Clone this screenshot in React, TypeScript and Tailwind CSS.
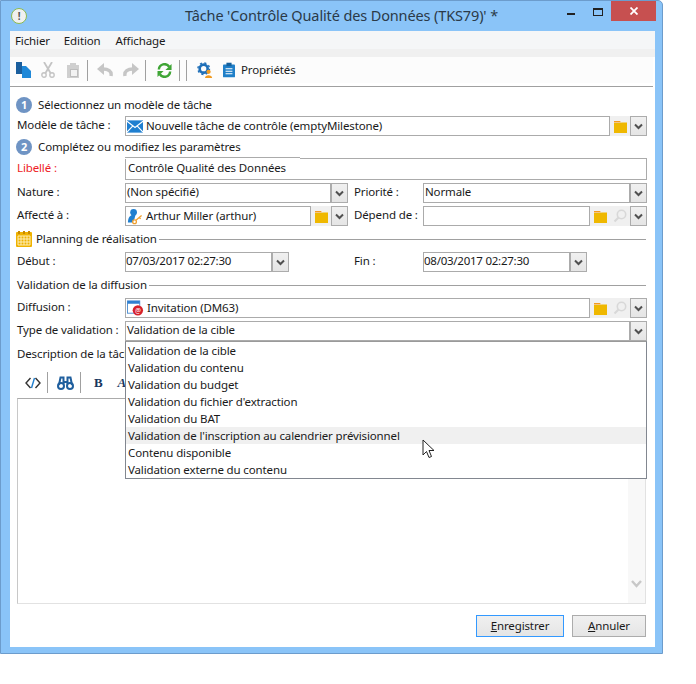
import type { ReactNode } from 'react'

function Chevron() {
  return (
    <svg width="9" height="7" viewBox="0 0 9 7">
      <path d="M1 1.5 L4.5 5 L8 1.5" fill="none" stroke="#505050" strokeWidth="2" />
    </svg>
  )
}

function DropButton() {
  return (
    <div className="flex h-full w-[17px] shrink-0 items-center justify-center border border-[#acacac] bg-gradient-to-b from-[#f0f0f0] to-[#e5e5e5]">
      <Chevron />
    </div>
  )
}

function FolderIcon() {
  return (
    <svg width="13" height="13" viewBox="0 0 13 13">
      <path d="M0 1 H6 L7 2.5 H0 Z" fill="#f39a1d" />
      <path d="M0 3 H6.5 L7.5 2.5 H13 V13 H0 Z" fill="#efb800" />
    </svg>
  )
}

function SearchIcon() {
  return (
    <svg width="14" height="14" viewBox="0 0 14 14">
      <circle cx="8.5" cy="5.5" r="4.2" fill="none" stroke="#d8d8d8" strokeWidth="1.6" />
      <path d="M5.5 8.5 L1.5 12.5" stroke="#d8d8d8" strokeWidth="2.2" />
    </svg>
  )
}

function SideButton({ children }: { children: ReactNode }) {
  return <div className="flex h-full w-5 shrink-0 items-center justify-center bg-[#f0f0f0]">{children}</div>
}

function Input({ children, className = 'pb-[2px] pl-[1px]' }: { children?: ReactNode; className?: string }) {
  return (
    <div className={`relative flex h-full min-w-0 flex-1 items-center gap-[3px] whitespace-nowrap border border-[#ababab] bg-white ${className}`}>
      {children}
    </div>
  )
}

function Label({ children, red, width = 'w-[108px]' }: { children: ReactNode; red?: boolean; width?: string }) {
  return (
    <div className={`shrink-0 whitespace-nowrap pb-[2px] ${width} ${red ? 'text-[#ee1c25]' : ''}`}>{children}</div>
  )
}

function Step({ n, children }: { n: number; children: ReactNode }) {
  return (
    <div className="flex h-5 items-center gap-[6px]">
      <span className="-ml-px flex h-4 w-4 items-center justify-center rounded-full bg-[#6f94c4] text-[11px] font-bold text-white">{n}</span>
      {children}
    </div>
  )
}

function MailIcon() {
  return (
    <svg width="16" height="13" viewBox="0 0 17 13" className="shrink-0">
      <rect width="17" height="13" fill="#1f7fd0" />
      <path d="M0 1 L8.5 7.5 L17 1 M0 12.5 L6 6 M17 12.5 L11 6" fill="none" stroke="#fff" strokeWidth="1.2" />
    </svg>
  )
}

function UserKeyIcon() {
  return (
    <svg width="16" height="17" viewBox="0 0 17 17" className="shrink-0">
      <circle cx="7" cy="4" r="3.6" fill="#1f7fd0" />
      <path d="M1 15 C1 10 3 8 5 7 H9 L8 11 L6 15 Z" fill="#1f7fd0" />
      <circle cx="8" cy="14" r="2" fill="none" stroke="#f0a030" strokeWidth="1.4" />
      <path d="M9.5 12.5 L15.5 7.5 M13 9.5 L14.5 11" stroke="#f0a030" strokeWidth="1.4" fill="none" />
    </svg>
  )
}

function InvitationIcon() {
  return (
    <svg width="17" height="18" viewBox="0 0 18 18" className="shrink-0">
      <rect x="0.5" y="1.5" width="13" height="13" fill="#fff" stroke="#4f8ed0" />
      <rect x="0.5" y="1.5" width="13" height="3" fill="#2f7fd0" />
      <circle cx="11.5" cy="11.5" r="5.5" fill="#d6202a" />
      <text x="11.5" y="14" fontSize="7" textAnchor="middle" fill="#fff">@</text>
    </svg>
  )
}

function CalendarIcon() {
  return (
    <svg width="16" height="16" viewBox="0 0 16 16" className="shrink-0">
      <rect y="1" width="16" height="15" rx="1" fill="#efb200" />
      <rect x="2" y="0" width="2" height="3" fill="#c98a00" />
      <rect x="7" y="0" width="2" height="3" fill="#c98a00" />
      <rect x="12" y="0" width="2" height="3" fill="#c98a00" />
      <path d="M2 5 H14 V14 H2 Z M5 5 V14 M8 5 V14 M11 5 V14 M2 8 H14 M2 11 H14" fill="none" stroke="#fff3c4" strokeWidth="0.9" />
    </svg>
  )
}

function SectionTitle({ children, icon }: { children: ReactNode; icon?: ReactNode }) {
  return (
    <div className="flex h-5 items-center gap-[2px]">
      {icon && <span className="-ml-px mr-[2px] flex">{icon}</span>}
      <span>{children}</span>
      <span className="mr-[1px] h-px flex-1 bg-[#a0a0a0]" />
    </div>
  )
}

function TopToolbar() {
  return (
    <div className="mr-[2px] flex h-[26px] items-center bg-[#fcfcfc] pl-[6px]">
      <svg width="15" height="16" viewBox="0 0 15 16">
        <path d="M0 0 H6 V12 H0 Z" fill="#1b5f9e" />
        <path d="M6 4 H10 L15 9 V16 H6 Z" fill="#1f88d8" />
      </svg>
      <svg width="14" height="16" viewBox="0 0 14 16" className="ml-[10px]">
        <path d="M3 0 L9.5 11 M11 0 L4.5 11" stroke="#c4c4c4" strokeWidth="1.8" />
        <circle cx="3" cy="13" r="2.2" fill="none" stroke="#c4c4c4" strokeWidth="1.4" />
        <circle cx="11" cy="13" r="2.2" fill="none" stroke="#c4c4c4" strokeWidth="1.4" />
      </svg>
      <svg width="12" height="15" viewBox="0 0 12 15" className="ml-[12px]">
        <path d="M0 2 H3 V0 H9 V2 H12 V15 H0 Z" fill="#cfcfcf" />
        <rect x="3.5" y="6.5" width="7" height="7" fill="#f2f2f2" stroke="#bdbdbd" />
      </svg>
      <span className="ml-[8px] h-[21px] w-px bg-[#a0a0a0]" />
      <svg width="16" height="14" viewBox="0 0 16 14" className="ml-[9px]">
        <path d="M14 13 C15 8 11 6 6 6" fill="none" stroke="#c6c6c6" strokeWidth="3.4" />
        <path d="M7 0 L0 6 L7 12 Z" fill="#c6c6c6" />
      </svg>
      <svg width="16" height="14" viewBox="0 0 16 14" className="ml-[10px]">
        <path d="M2 13 C1 8 5 6 10 6" fill="none" stroke="#c6c6c6" strokeWidth="3.4" />
        <path d="M9 0 L16 6 L9 12 Z" fill="#c6c6c6" />
      </svg>
      <span className="ml-[6px] h-[21px] w-px bg-[#a0a0a0]" />
      <svg width="15" height="15" viewBox="0 0 16 16" className="ml-[11px]">
        <path d="M2 7 A6 6 0 0 1 13 4" fill="none" stroke="#3fa535" strokeWidth="2.6" />
        <path d="M15.5 1 V7.5 H9 Z" fill="#3fa535" />
        <path d="M14 9 A6 6 0 0 1 3 12" fill="none" stroke="#3fa535" strokeWidth="2.6" />
        <path d="M0.5 15 V8.5 H7 Z" fill="#3fa535" />
      </svg>
      <span className="ml-[7px] h-[21px] w-px bg-[#a0a0a0]" />
      <span className="ml-[6px] h-[21px] w-px bg-[#a0a0a0]" />
      <svg width="16" height="16" viewBox="0 0 18 18" className="ml-[10px]">
        <circle cx="7.5" cy="7.5" r="4.5" fill="none" stroke="#1f6fb8" strokeWidth="3" />
        <circle cx="7.5" cy="7.5" r="6.5" fill="none" stroke="#1f6fb8" strokeWidth="1.6" strokeDasharray="2.4 2.7" />
        <circle cx="13" cy="11" r="2.4" fill="#f09a20" />
        <path d="M9 18 C9 14 17 14 17 18 Z" fill="#f09a20" />
      </svg>
      <svg width="12" height="16" viewBox="0 0 14 17" className="ml-[10px]">
        <rect y="2" width="14" height="15" rx="1" fill="#1f7fc8" />
        <rect x="4" y="0" width="6" height="4" fill="#15609c" />
        <path d="M3 7 H11 M3 10 H11 M3 13 H11" stroke="#fff" strokeWidth="1.2" />
      </svg>
      <span className="ml-[6px]">Propriétés</span>
    </div>
  )
}

const OPTIONS = [
  'Validation de la cible',
  'Validation du contenu',
  'Validation du budget',
  "Validation du fichier d'extraction",
  'Validation du BAT',
  "Validation de l'inscription au calendrier prévisionnel",
  'Contenu disponible',
  'Validation externe du contenu',
]

function OptionsList() {
  return (
    <div className="absolute left-0 right-0 top-full z-10 h-[138px] border border-[#828790] border-t-[#9a9a9a] bg-white">
      {OPTIONS.map((o, i) => (
        <div key={o} className={`flex h-[17px] items-center pl-[2px] ${i === 5 ? 'bg-[#f0f0f0]' : ''}`}>
          {o}
        </div>
      ))}
      <svg width="14" height="21" viewBox="0 0 14 21" className="absolute left-[296px] top-[97px]">
        <path d="M1 1 V16 L4.5 12.5 L7 18.5 L9.5 17.5 L7 11.5 H12 Z" fill="#fff" stroke="#222" strokeWidth="1" />
      </svg>
    </div>
  )
}

function EditorToolbar() {
  return (
    <div className="flex h-[31px] items-center pl-[8px] text-[#17375e]">
      <svg width="16" height="14" viewBox="0 0 16 14">
        <path d="M5.5 2 L1 7 L5.5 12 M10.5 2 L15 7 L10.5 12" fill="none" stroke="#333" strokeWidth="1.4" />
        <path d="M9.5 2 L6.5 12" stroke="#1f7fd0" strokeWidth="1.4" />
      </svg>
      <span className="ml-[6px] h-[21px] w-px bg-[#a0a0a0]" />
      <svg width="17" height="14" viewBox="0 0 17 14" className="ml-[9px]">
        <circle cx="4" cy="10" r="3" fill="none" stroke="#1f5f9e" strokeWidth="2" />
        <circle cx="13" cy="10" r="3" fill="none" stroke="#1f5f9e" strokeWidth="2" />
        <path d="M2 9 L3.5 1.5 H6.5 V8 M15 9 L13.5 1.5 H10.5 V8 M6 6 H11" fill="none" stroke="#1f5f9e" strokeWidth="2" />
      </svg>
      <span className="ml-[6px] h-[21px] w-px bg-[#a0a0a0]" />
      <span className="ml-[13px] font-['Liberation_Serif',serif] text-[13px] font-bold">B</span>
      <span className="ml-[15px] font-['Liberation_Serif',serif] text-[13px] font-bold italic">A</span>
    </div>
  )
}

export default function App() {
  return (
    <div className="h-[684px] w-[696px] bg-white font-['Noto_Sans',sans-serif] text-[11.5px] tracking-[-0.13px] text-[#1a1a1a]">
      <div className="flex h-[654px] w-[663px] flex-col rounded-tr-[5px] border border-[#6c9ccc] bg-[#8ac4f8] pb-[6px] pl-[9px] pr-[7px]">
        {/* titlebar */}
        <div className="relative flex h-[30px] shrink-0 items-center justify-center pl-[18px] text-[14.5px] text-[#2b3a48]">
          <span className="absolute left-[1px] top-[7px] flex h-4 w-4 items-center justify-center rounded-full border border-[#8cba50] bg-[#f0f0f0] text-[10px] font-bold leading-none text-[#555]">!</span>
          <span>Tâche 'Contrôle Qualité des Données (TKS79)' *</span>
          <div className="absolute right-[-1px] top-0 flex h-[21px] items-start">
            <span className="mr-[18px] mt-[12px] h-[2px] w-[8px] bg-[#222]" />
            <span className="mr-[8px] mt-[7px] h-[8px] w-[10px] border border-t-2 border-[#222]" />
            <span className="flex h-[20px] w-[45px] items-center justify-center bg-[#c75050]">
              <svg width="8" height="8" viewBox="0 0 8 8">
                <path d="M0.5 0.5 L7.5 7.5 M7.5 0.5 L0.5 7.5" stroke="#fff" strokeWidth="1.8" />
              </svg>
            </span>
          </div>
        </div>

        <div className="flex min-h-0 flex-1 flex-col bg-white">
          <div className="flex h-[18px] shrink-0 items-center bg-[#f5f6f7] pl-[5px] pt-[2px]">
            <span>Fichier</span>
            <span className="ml-[14px]">Edition</span>
            <span className="ml-[15px]">Affichage</span>
          </div>
          <div className="h-2 shrink-0 bg-[#f0f0f0]" />
          <TopToolbar />
          <div className="mr-[2px] mt-[3px] h-px shrink-0 bg-[#a0a0a0]" />

          <div className="flex min-h-0 flex-1 flex-col pl-[7px] pr-[8px] pt-2">
            <Step n={1}>Sélectionnez un modèle de tâche</Step>
            <div className="mt-px flex h-5 items-center">
              <Label>Modèle de tâche :</Label>
              <Input className="pl-[1px]"><MailIcon />Nouvelle tâche de contrôle (emptyMilestone)</Input>
              <SideButton><FolderIcon /></SideButton>
              <DropButton />
            </div>
            <div className="mt-px"><Step n={2}>Complétez ou modifiez les paramètres</Step></div>
            <div className="mt-px flex h-[22px] items-center">
              <Label red>Libellé :</Label>
              <Input className="pb-[3px] pl-[2px]">
                {/* the reference's top border steps up one pixel on its left part */}
                <span className="absolute -left-px -top-[2px] h-px w-[175px] bg-[#ababab]" />
                <span className="absolute -left-px -top-px h-px w-[175px] bg-white" />
                Contrôle Qualité des Données
              </Input>
            </div>
            <div className="mt-[3px] flex h-5 items-center">
              <div className="flex h-full w-[337px] shrink-0 items-center pr-[6px]">
                <Label>Nature :</Label>
                <Input>(Non spécifié)</Input>
                <DropButton />
              </div>
              <Label width="w-[69px]">Priorité :</Label>
              <Input>Normale</Input>
              <DropButton />
            </div>
            <div className="mt-[3px] flex h-5 items-center">
              <div className="flex h-full w-[337px] shrink-0 items-center pr-[6px]">
                <Label>Affecté à :</Label>
                <Input className="pl-[1px]"><UserKeyIcon />Arthur Miller (arthur)</Input>
                <SideButton><FolderIcon /></SideButton>
                <DropButton />
              </div>
              <Label width="w-[69px]">Dépend de :</Label>
              <Input />
              <SideButton><FolderIcon /></SideButton>
              <SideButton><SearchIcon /></SideButton>
              <DropButton />
            </div>
            <div className="mt-[3px]"><SectionTitle icon={<CalendarIcon />}>Planning de réalisation</SectionTitle></div>
            <div className="mt-[3px] flex h-5 items-center">
              <div className="flex h-full w-[337px] shrink-0 items-center">
                <Label>Début :</Label>
                <div className="flex h-full w-[164px]">
                  <Input className="pb-[2px] tracking-[-0.25px]">07/03/2017 02:27:30</Input>
                  <DropButton />
                </div>
              </div>
              <Label width="w-[69px]">Fin :</Label>
              <div className="flex h-full w-[164px]">
                <Input className="pb-[2px] tracking-[-0.25px]">08/03/2017 02:27:30</Input>
                <DropButton />
              </div>
            </div>
            <div className="mt-[3px]"><SectionTitle>Validation de la diffusion</SectionTitle></div>
            <div className="mt-[3px] flex h-5 items-center">
              <Label>Diffusion :</Label>
              <Input className="pl-[1px]"><InvitationIcon />Invitation (DM63)</Input>
              <SideButton><FolderIcon /></SideButton>
              <SideButton><SearchIcon /></SideButton>
              <DropButton />
            </div>
            <div className="mt-[3px] flex h-5 items-center">
              <Label>Type de validation :</Label>
              <div className="relative flex h-full flex-1">
                <Input>Validation de la cible</Input>
                <DropButton />
                <OptionsList />
              </div>
            </div>
            <div className="mt-[3px] flex h-5 items-center">Description de la tâche</div>
            <div className="mt-[3px]"><EditorToolbar /></div>
            <div className="mr-px flex h-[206px] justify-end border border-[#ababab] border-b-[#e2e2e2] border-l-[#c8c8c8] border-r-[#e2e2e2] bg-white">
              <div className="flex w-[17px] flex-col justify-end bg-[#f8f8f8] pb-[15px] pl-[3px]">
                <svg width="11" height="8" viewBox="0 0 11 8">
                  <path d="M1 1 L5.5 6 L10 1" fill="none" stroke="#c8c8c8" strokeWidth="2.4" />
                </svg>
              </div>
            </div>
            <div className="mr-px mt-[11px] flex justify-end gap-[8px]">
              <button className="h-[22px] w-[88px] border border-[#3399ff] bg-gradient-to-b from-[#f0f0f0] to-[#e5e5e5]"><u>E</u>nregistrer</button>
              <button className="h-[22px] w-[74px] border border-[#acacac] bg-gradient-to-b from-[#f0f0f0] to-[#e5e5e5]"><u>A</u>nnuler</button>
            </div>
          </div>
        </div>
      </div>
    </div>
  )
}
